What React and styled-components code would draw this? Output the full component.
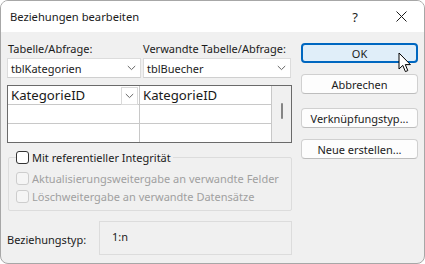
import styled, { createGlobalStyle } from "styled-components";

const Global = createGlobalStyle`
    html, body {
        margin: 0;
        padding: 0;
        background: #ffffff;
    }
    * {
        box-sizing: border-box;
    }
`;

const FONT = `"Noto Sans", "Open Sans", sans-serif`;

const Window = styled.div`
    position: relative;
    width: 425px;
    height: 264px;
    border: 1px solid #a7a7a7;
    border-radius: 8px;
    overflow: hidden;
    background: #f0f0f0;
    font-family: ${FONT};
    font-size: 11px;
    white-space: nowrap;
    color: #1b1b1b;
    display: flex;
    flex-direction: column;
`;

const TitleBar = styled.div`
    height: 31px;
    flex: none;
    background: #ffffff;
    display: flex;
    align-items: center;
    padding-left: 9px;
`;

const Title = styled.div`
    flex: 1;
    font-size: 11.2px;
`;

const Caption = styled.div`
    width: 46px;
    height: 31px;
    display: flex;
    align-items: center;
    justify-content: center;
    font-size: 13px;
`;

const Body = styled.div`
    flex: 1;
    display: flex;
    gap: 9px;
    padding: 0 6px 0 6px;
`;

const Left = styled.div`
    width: 285px;
    display: flex;
    flex-direction: column;
`;

const Labels = styled.div`
    display: grid;
    grid-template-columns: 135px 1fr;
    height: 25px;
    align-items: end;
    padding-bottom: 1px;
    span {
        padding-left: 1px;
    }
`;

const Combos = styled.div`
    display: grid;
    grid-template-columns: 134px 148px;
    gap: 2px;
    margin-top: 1px;
`;

const Combo = styled.div`
    height: 20px;
    background: #ffffff;
    border: 1px solid #dcdcdc;
    border-bottom-color: #cfcfcf;
    display: flex;
    align-items: center;
    padding-left: 3px;
    padding-right: 4px;
    span {
        flex: 1;
    }
`;

const Chevron = ({ color = "#666" }) => (
    <svg width="9" height="6" viewBox="0 0 9 6">
        <path d="M0.8 1 L4.5 4.6 L8.2 1" fill="none" stroke={color} strokeWidth="1" />
    </svg>
);

const Table = styled.div`
    margin-top: 7px;
    height: 58px;
    background: #ffffff;
    border: 1px solid #6a6a6a;
    display: grid;
    grid-template-columns: 132px 132px 1fr;
    grid-template-rows: 19px 19px 1fr;
`;

const Cell = styled.div`
    border-right: 1px solid #c8c8c8;
    border-bottom: ${(p) => (p.$last ? "none" : "1px solid #c8c8c8")};
    display: flex;
    align-items: center;
    padding-left: 3px;
    font-size: 13.2px;
    color: #1a1a1a;
    span {
        flex: 1;
    }
`;

const CellButton = styled.div`
    width: 17px;
    height: 18px;
    margin-right: 1px;
    margin-top: 1px;
    border: 1px solid #dadada;
    display: flex;
    align-items: center;
    justify-content: center;
    background: #ffffff;
`;

const ScrollTrack = styled.div`
    grid-column: 3;
    grid-row: 1 / span 3;
    background: #f0f0f0;
    display: flex;
    justify-content: center;
    padding-top: 17px;
`;

const Thumb = styled.div`
    width: 2px;
    height: 16px;
    border-radius: 1px;
    background: #858585;
`;

const Group = styled.fieldset`
    margin: 8px 0 0 1px;
    padding: 8px 0 7px 7px;
    border: 1px solid #dcdcdc;
    border-radius: 2px;
    display: flex;
    flex-direction: column;
    gap: 5px;
    legend {
        padding: 0 2px 0 0;
        margin-left: 0;
    }
`;

const Check = styled.label`
    display: flex;
    align-items: center;
    gap: 3px;
    height: 13px;
    color: ${(p) => (p.$disabled ? "#a0a0a0" : "#1b1b1b")};
`;

const Box = styled.span`
    width: 13px;
    height: 13px;
    border-radius: 3px;
    border: 1px solid ${(p) => (p.$disabled ? "#cdcdcd" : "#333333")};
    background: ${(p) => (p.$disabled ? "#f5f5f5" : "#ffffff")};
`;

const TypeRow = styled.div`
    margin-top: 10px;
    display: flex;
    align-items: center;
    span {
        width: 92px;
        padding-top: 3px;
    }
`;

const TypeBox = styled.div`
    width: 193px;
    height: 34px;
    border: 1px solid #dcdcdc;
    padding: 7px 0 0 12px;
`;

const Right = styled.div`
    width: 117px;
    padding-top: 11px;
    display: flex;
    flex-direction: column;
    gap: 11px;
`;

const Button = styled.div`
    height: 20px;
    border-radius: 4px;
    display: flex;
    align-items: center;
    justify-content: center;
    background: ${(p) => (p.$primary ? "#e0eef9" : "#fdfdfd")};
    border: ${(p) => (p.$primary ? "2px solid #0067c0" : "1px solid #d0d0d0")};
    border-bottom-color: ${(p) => (p.$primary ? "#0067c0" : "#bdbdbd")};
    color: #1b1b1b;
    margin-top: ${(p) => p.$mt || 0}px;
`;

const Cursor = styled.svg`
    position: absolute;
    left: 397px;
    top: 51px;
`;

export default function App() {
    return (
        <>
            <Global />
            <Window>
                <TitleBar>
                    <Title>Beziehungen bearbeiten</Title>
                    <Caption>?</Caption>
                    <Caption>
                        <svg width="11" height="11" viewBox="0 0 11 11">
                            <path d="M0.5 0.5 L10.5 10.5 M10.5 0.5 L0.5 10.5" stroke="#1b1b1b" strokeWidth="1" />
                        </svg>
                    </Caption>
                </TitleBar>
                <Body>
                    <Left>
                        <Labels>
                            <span>Tabelle/Abfrage:</span>
                            <span>Verwandte Tabelle/Abfrage:</span>
                        </Labels>
                        <Combos>
                            <Combo>
                                <span>tblKategorien</span>
                                <Chevron />
                            </Combo>
                            <Combo>
                                <span>tblBuecher</span>
                                <Chevron />
                            </Combo>
                        </Combos>
                        <Table>
                            <Cell>
                                <span>KategorieID</span>
                                <CellButton>
                                    <Chevron />
                                </CellButton>
                            </Cell>
                            <Cell>
                                <span>KategorieID</span>
                            </Cell>
                            <ScrollTrack>
                                <Thumb />
                            </ScrollTrack>
                            <Cell />
                            <Cell />
                            <Cell $last />
                            <Cell $last />
                        </Table>
                        <Group>
                            <legend>
                                <Check>
                                    <Box />
                                    Mit referentieller Integrität
                                </Check>
                            </legend>
                            <Check $disabled>
                                <Box $disabled />
                                Aktualisierungsweitergabe an verwandte Felder
                            </Check>
                            <Check $disabled>
                                <Box $disabled />
                                Löschweitergabe an verwandte Datensätze
                            </Check>
                        </Group>
                        <TypeRow>
                            <span>Beziehungstyp:</span>
                            <TypeBox>1:n</TypeBox>
                        </TypeRow>
                    </Left>
                    <Right>
                        <Button $primary>OK</Button>
                        <Button>Abbrechen</Button>
                        <Button $mt={3}>Verknüpfungstyp...</Button>
                        <Button>Neue erstellen...</Button>
                    </Right>
                </Body>
                <Cursor width="14" height="22" viewBox="0 0 14 22">
                    <path
                        d="M1 1 L1 17 L4.8 13.4 L7.4 19.6 L9.8 18.6 L7.3 12.6 L12.4 12.6 Z"
                        fill="#ffffff"
                        stroke="#000000"
                        strokeWidth="1"
                        strokeLinejoin="round"
                    />
                </Cursor>
            </Window>
        </>
    );
}
